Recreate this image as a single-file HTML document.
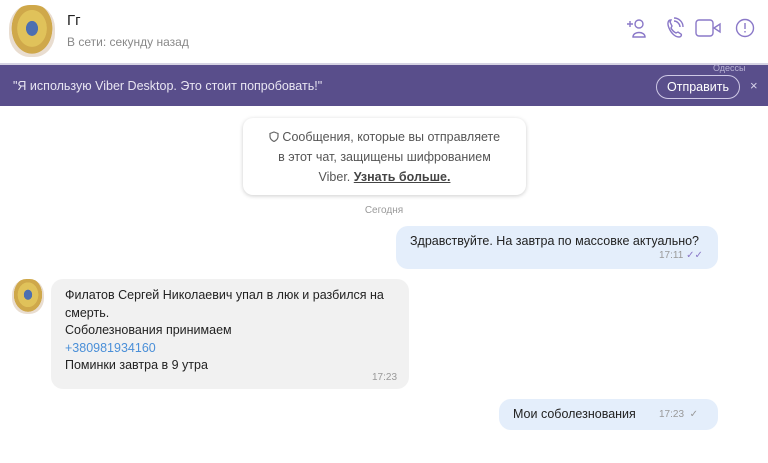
<!DOCTYPE html><html><head><meta charset="utf-8"><style>
body{margin:0;width:768px;height:463px;overflow:hidden;background:#fff;font-family:"Liberation Sans",sans-serif;position:relative}
.a{position:absolute}
.av{border-radius:45%;background:radial-gradient(ellipse at 50% 45%,#4d6fb0 0 18%,#e0c25a 19% 45%,#cfa84a 46% 62%,#e9ddd0 63% 80%,#fff 81%)}
.t{font-size:12.5px;color:#222}
</style></head><body>
<div class="a av" style="left:9px;top:5px;width:46px;height:52px"></div>
<div class="a" style="left:67px;top:12px;font-size:15px;color:#222">Гг</div>
<div class="a" style="left:67px;top:35px;font-size:12px;color:#888">В сети: секунду назад</div>
<svg class="a" style="left:620px;top:12px" width="140" height="30" fill="none" stroke="#8a78c8" stroke-width="1.4">
<path d="M7 12h6M10 9v6"/><circle cx="19" cy="12" r="4"/><path d="M13 25c0-6 12-6 12 0z"/>
<path d="M51 8c-3 0-4 3-2 8s6 9 10 9c2 0 3-2 2-3l-3-2-2 1c-2-1-4-3-5-5l1-2-2-4z"/><path d="M54 9c3 0 6 3 6 6M54 6c5 0 9 4 9 9"/>
<rect x="76" y="8" width="17" height="16" rx="3"/><path d="M94 16l6-4v8z"/>
<circle cx="125" cy="16" r="8.5"/><path d="M125 11v6M125 19v1.5"/></svg>
<div class="a" style="left:0;top:63px;width:768px;height:2px;background:#d6d3e3"></div>
<div class="a" style="left:0;top:65px;width:768px;height:41px;background:#594e8b"></div>
<div class="a" style="left:13px;top:79px;color:#e8e5f2;font-size:12.5px">"Я использую Viber Desktop. Это стоит попробовать!"</div>
<div class="a" style="left:656px;top:75px;width:82px;height:22px;border:1px solid #cfc9e6;border-radius:12px;color:#fff;font-size:12.5px;text-align:center;line-height:22px">Отправить</div>
<div class="a" style="left:750px;top:78px;color:#d8d3ea;font-size:13px">×</div>
<div class="a" style="left:713px;top:63px;color:#b8b2d4;font-size:9px">Одессы</div>
<div class="a" style="left:243px;top:118px;width:283px;height:77px;border-radius:10px;background:#fff;box-shadow:0 1px 4px rgba(0,0,0,.2);text-align:center;font-size:12.5px;color:#555;line-height:20px;padding-top:9px;box-sizing:border-box"><svg width="10" height="11" style="vertical-align:-1px" fill="none" stroke="#666" stroke-width="1.2"><path d="M5 1l4 1.5v3c0 2.5-2 4-4 5-2-1-4-2.5-4-5v-3z"/></svg> Сообщения, которые вы отправляете<br>в этот чат, защищены шифрованием<br>Viber. <b style="text-decoration:underline;color:#444">Узнать больше.</b></div>
<div class="a" style="left:0;width:768px;top:205px;text-align:center;font-size:10px;color:#999">Сегодня</div>
<div class="a" style="left:396px;top:226px;width:322px;height:43px;background:#e4eefb;border-radius:12px"></div>
<div class="a t" style="left:410px;top:234px">Здравствуйте. На завтра по массовке актуально?</div>
<div class="a" style="left:659px;top:250px;font-size:10px;color:#999">17:11 <span style="color:#8a78c8">✓✓</span></div>
<div class="a av" style="left:12px;top:279px;width:32px;height:35px"></div>
<div class="a" style="left:51px;top:279px;width:358px;height:110px;background:#f1f1f1;border-radius:12px"></div>
<div class="a t" style="left:65px;top:287px;line-height:17.5px">Филатов Сергей Николаевич упал в люк и разбился на<br>смерть.<br>Соболезнования принимаем<br><span style="color:#4a8fd8">+380981934160</span><br>Поминки завтра в 9 утра</div>
<div class="a" style="left:372px;top:372px;font-size:10px;color:#999">17:23</div>
<div class="a" style="left:499px;top:399px;width:219px;height:31px;background:#e4eefb;border-radius:12px"></div>
<div class="a t" style="left:513px;top:407px">Мои соболезнования</div>
<div class="a" style="left:659px;top:409px;font-size:10px;color:#999">17:23 &nbsp;✓</div>
</body></html>
